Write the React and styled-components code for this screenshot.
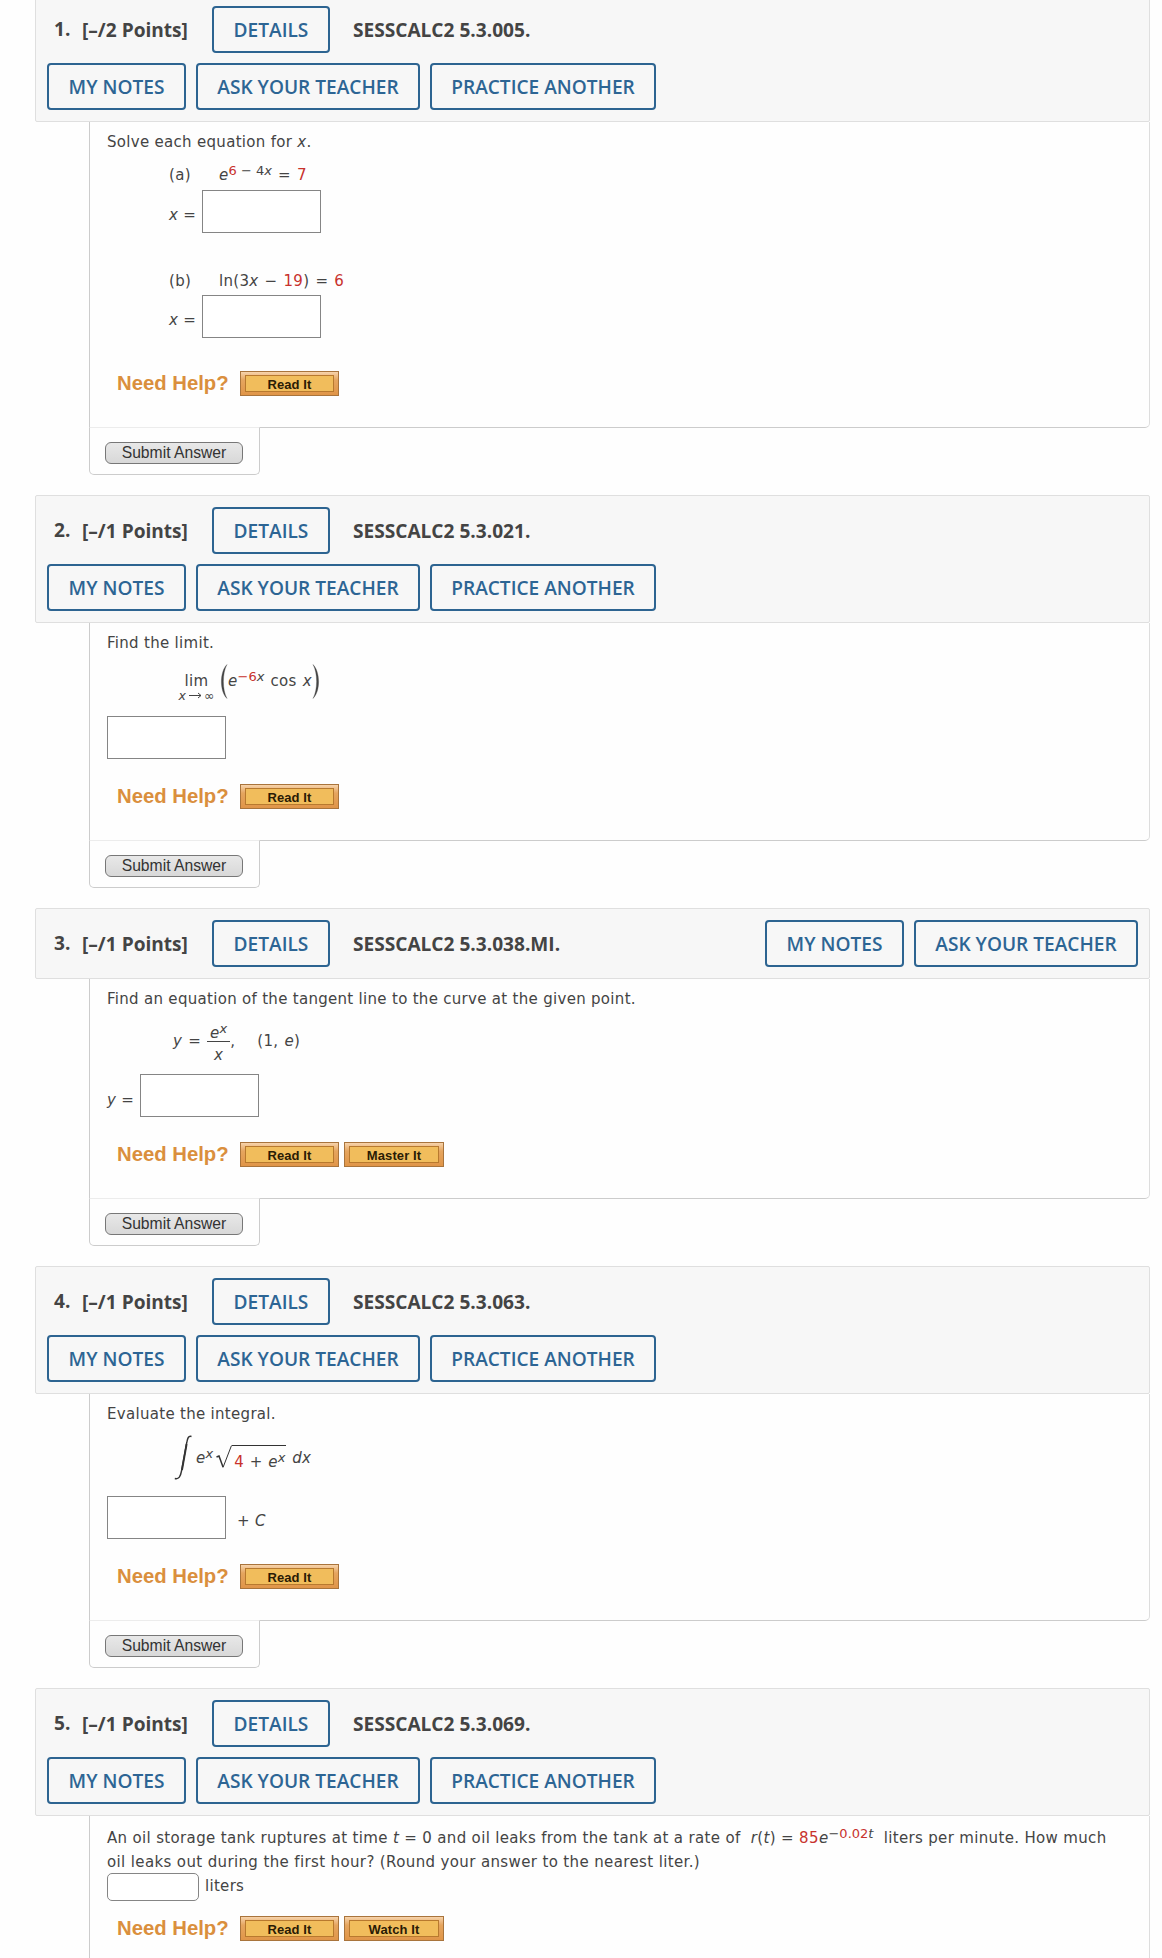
import React from "react";
import styled, { createGlobalStyle } from "styled-components";

const GlobalStyle = createGlobalStyle`
  * {
    box-sizing: border-box;
  }
  body {
    margin: 0;
    background: #fefefe;
    overflow: hidden;
  }
`;

const Page = styled.main`
  height: 1958px;
  overflow: hidden;
  padding: 0 12px 0 35px;
  color: #444;
`;

const Question = styled.section`
  margin-bottom: 20px;
  &:first-child {
    margin-top: -6px;
  }
`;

const Header = styled.header`
  display: flex;
  flex-wrap: wrap;
  justify-content: space-between;
  gap: 10px;
  padding: 11px;
  background: #f7f7f7;
  border: 1px solid #dfdfdf;
  border-radius: 2px;
  font-family: "Open Sans", sans-serif;
`;

const HeaderTitle = styled.div`
  display: flex;
  align-items: center;
  height: 47px;
  width: ${(props) => (props.$full ? "100%" : "auto")};
  padding-left: 7px;
  font-size: 19.1px;
  font-weight: 700;
  white-space: pre;
`;

const Number = styled.span`
  width: 28px;
  padding-bottom: 2px;
`;

const Points = styled.span`
  width: 130px;
`;

const Reference = styled.span`
  margin-left: 23px;
`;

const HeaderActions = styled.div`
  display: flex;
  gap: 10px;
`;

const HeaderButton = styled.button`
  width: ${(props) => props.$width}px;
  height: 47px;
  padding: 1px 0 0;
  color: #2d6594;
  background: transparent;
  border: 2px solid #2d6491;
  border-radius: 4px;
  font-family: "Open Sans", sans-serif;
  font-size: 19.1px;
  font-weight: 600;
  line-height: 41px;
  white-space: nowrap;
`;

const Body = styled.div`
  display: flex;
  flex-direction: column;
  height: ${(props) => props.$height}px;
  margin-left: 54px;
  padding: 7px 0 0 17px;
  border: 1px solid #ccc;
  border-top: 0;
  border-right-color: #ddd;
  border-radius: 0 0 5px 0;
  font-family: "DejaVu Sans", sans-serif;
  font-size: 15px;
  letter-spacing: 0.3px;
`;

const Line = styled.div`
  height: 24px;
  line-height: 24px;
  margin-top: ${(props) => props.$top || 0}px;
  white-space: pre;
`;

const Prompt = styled(Line)`
  padding-top: 1px;
  letter-spacing: ${(props) => props.$spacing || 0.3}px;
`;

const PartLine = styled(Line)`
  margin-left: 62px;
  word-spacing: 1px;
`;

const AnswerRow = styled.div`
  display: flex;
  align-items: center;
  margin-top: ${(props) => props.$top || 0}px;
  margin-left: ${(props) => props.$left || 0}px;
`;

const AnswerLabel = styled.span`
  width: ${(props) => props.$width}px;
  padding-top: ${(props) => props.$drop || 0}px;
  line-height: 20px;
`;

const AnswerInput = styled.input`
  width: ${(props) => (props.$small ? 92 : 119)}px;
  height: ${(props) => (props.$small ? 28 : 43)}px;
  padding: 0 6px;
  background: #fff;
  border: 1px solid #858585;
  border-radius: ${(props) => (props.$small ? 5 : 0)}px;
`;

const Unit = styled.span`
  margin-left: ${(props) => props.$left}px;
  padding-top: ${(props) => props.$drop || 0}px;
  padding-bottom: ${(props) => props.$lift || 0}px;
  line-height: 20px;
`;

const Part = styled.span`
  display: inline-block;
  width: 50px;
`;

const Sup = styled.sup`
  font-size: 13px;
  line-height: 0;
  letter-spacing: 0;
  word-spacing: 0;
  vertical-align: 5.5px;
`;

const Red = styled.span`
  color: #c8322d;
`;

const Gap = styled.span`
  display: inline-block;
  width: ${(props) => props.$width}px;
`;

const MathRow = styled.div`
  display: flex;
  align-items: center;
  height: ${(props) => props.$height}px;
  margin-top: ${(props) => props.$top}px;
  margin-left: ${(props) => props.$left}px;
  white-space: pre;
  line-height: 20px;
  word-spacing: 1px;
`;

const Limit = styled.span`
  display: flex;
  flex-direction: column;
  align-items: center;
  width: 41px;
  padding-top: 11px;
  line-height: 17px;
  small {
    display: flex;
    align-items: center;
    gap: 2px;
    font-size: 12.5px;
    line-height: 11px;
    letter-spacing: 0;
  }
`;

const Fraction = styled.span`
  display: flex;
  flex-direction: column;
  align-items: center;
  width: 23px;
  padding-top: 2px;
  span:first-child {
    width: 100%;
    height: 21px;
    padding-top: 2px;
    border-bottom: 1px solid #444;
    text-align: center;
  }
  span:last-child {
    height: 21px;
    line-height: 26px;
  }
`;

const Radicand = styled.span`
  height: 25px;
  width: 54px;
  padding: 6px 0 0 2px;
  border-top: 1px solid #333;
  letter-spacing: 0.1px;
`;

const Help = styled.div`
  display: flex;
  align-items: flex-start;
  gap: 5px;
  margin-top: ${(props) => (props.$top ? `${props.$top}px` : "auto")};
  margin-left: 10px;
  margin-bottom: 31px;
  letter-spacing: 0;
`;

const HelpTitle = styled.span`
  width: 118px;
  color: #da8f3d;
  font-family: "Liberation Sans", Arial, sans-serif;
  font-size: 20.3px;
  font-weight: 700;
  line-height: 24px;
  white-space: nowrap;
`;

const HelpButton = styled.button`
  width: 99px;
  height: 25px;
  padding: 3px 4px;
  background: linear-gradient(#f7d3ab, #e5a55f 35%, #e09548);
  border: 1px solid #a9743c;
  & + & {
    width: 100px;
  }
  span {
    display: block;
    height: 17px;
    background: #f1bd5c;
    border: 1px solid #b8792e;
    color: #2a1b05;
    font-family: "Liberation Sans", Arial, sans-serif;
    font-size: 13px;
    font-weight: 700;
    line-height: 17px;
    letter-spacing: 0.1px;
  }
`;

const Footer = styled.div`
  width: 171px;
  height: 48px;
  margin: -1px 0 0 54px;
  padding: 14px 15px;
  background: #fefefe;
  border: 1px solid #ccc;
  border-top-color: #ececec;
  border-radius: 0 0 5px 5px;
`;

const SubmitButton = styled.button`
  display: block;
  width: 138px;
  height: 22px;
  padding: 0;
  color: #333;
  background: linear-gradient(#e8e8e8, #d8d8d8);
  border: 1px solid #777;
  border-radius: 6px;
  font-family: "Liberation Sans", Arial, sans-serif;
  font-size: 15.7px;
  line-height: 20px;
`;

const Paren = ({ right }) => (
  <svg width="8" height="35" viewBox="0 0 8 35">
    <path
      d={
        right
          ? "M1 .5C8 7 9 27 1 34.5C5.800 26 5.800 9 1 .5Z"
          : "M7 .5C0 7-1 27 7 34.500C2.200 26 2.200 9 7 .5Z"
      }
      fill="#444"
      stroke="#444"
      strokeWidth=".3"
    />
  </svg>
);

const Arrow = () => (
  <svg width="14" height="7" viewBox="0 0 14 7">
    <path d="M1 3.500H13M10 1L13 3.500L10 6" fill="none" stroke="#444" />
  </svg>
);

const Integral = () => (
  <svg width="18" height="45" viewBox="0 0 18 45">
    <path
      d="M17.500 1.500C14.500 .5 13.500 3 12.700 8L7.500 36C6.500 41.500 5 44.500.8 43.500"
      fill="none"
      stroke="#333"
      strokeWidth="1.400"
    />
    <path d="M12.600 9L8 35" stroke="#333" strokeWidth="1.900" />
  </svg>
);

const Radical = () => (
  <svg width="16" height="25" viewBox="0 0 16 25">
    <path d="M.5 12L3 11L7 22" fill="none" stroke="#333" strokeWidth="1.500" />
    <path d="M7 22.500L15.500 .5" fill="none" stroke="#333" />
  </svg>
);

const NeedHelp = ({ items, top }) => (
  <Help $top={top}>
    <HelpTitle>Need Help?</HelpTitle>
    {items.map((item) => (
      <HelpButton key={item}>
        <span>{item}</span>
      </HelpButton>
    ))}
  </Help>
);

const Exercise = ({ number, points, reference, height, inline, open, children }) => (
  <Question>
    <Header>
      <HeaderTitle $full={!inline}>
        <Number>{number}.</Number>
        <Points>[–/{points} Points]</Points>
        <HeaderButton $width={118}>DETAILS</HeaderButton>
        <Reference>{reference}</Reference>
      </HeaderTitle>
      <HeaderActions>
        <HeaderButton $width={139}>MY NOTES</HeaderButton>
        <HeaderButton $width={224}>ASK YOUR TEACHER</HeaderButton>
        {!inline && <HeaderButton $width={226}>PRACTICE ANOTHER</HeaderButton>}
      </HeaderActions>
    </Header>
    <Body $height={height}>{children}</Body>
    {!open && (
      <Footer>
        <SubmitButton>Submit Answer</SubmitButton>
      </Footer>
    )}
  </Question>
);

const App = () => {
  return (
    <>
      <GlobalStyle />
      <Page>
        <Exercise number={1} points={2} reference="SESSCALC2 5.3.005." height={306}>
          <Prompt>
            Solve each equation for <i>x</i>.
          </Prompt>
          <PartLine $top={10}>
            <Part>(a)</Part>
            <i>e</i>
            <Sup>
              <Red>6</Red> − 4<i>x</i>
            </Sup>
            {" = "}
            <Red>7</Red>
          </PartLine>
          <AnswerRow $top={3} $left={62}>
            <AnswerLabel $width={33} $drop={6}>
              <i>x</i> =
            </AnswerLabel>
            <AnswerInput />
          </AnswerRow>
          <PartLine $top={36}>
            <Part>(b)</Part>
            ln(3<i>x</i> − <Red>19</Red>) = <Red>6</Red>
          </PartLine>
          <AnswerRow $top={2} $left={62}>
            <AnswerLabel $width={33} $drop={6}>
              <i>x</i> =
            </AnswerLabel>
            <AnswerInput />
          </AnswerRow>
          <NeedHelp items={["Read It"]} />
        </Exercise>

        <Exercise number={2} points={1} reference="SESSCALC2 5.3.021." height={218}>
          <Prompt>Find the limit.</Prompt>
          <MathRow $height={36} $top={9} $left={69}>
            <Limit>
              <span>lim</span>
              <small>
                <i>x</i>
                <Arrow />
                <span>∞</span>
              </small>
            </Limit>
            <Gap $width={3} />
            <Paren />
            <span>
              <i>e</i>
              <Sup>
                <Red>−6</Red>
                <i>x</i>
              </Sup>
              {" cos "}
              <i>x</i>
            </span>
            <Paren right />
          </MathRow>
          <AnswerRow $top={17}>
            <AnswerInput />
          </AnswerRow>
          <NeedHelp items={["Read It"]} />
        </Exercise>

        <Exercise number={3} points={1} reference="SESSCALC2 5.3.038.MI." height={220} inline>
          <Prompt>Find an equation of the tangent line to the curve at the given point.</Prompt>
          <MathRow $height={42} $top={10} $left={66}>
            <span>
              <i>y</i> ={" "}
            </span>
            <Fraction>
              <span>
                <i>e</i>
                <Sup>
                  <i>x</i>
                </Sup>
              </span>
              <span>
                <i>x</i>
              </span>
            </Fraction>
            <span>,</span>
            <Gap $width={22} />
            <span>
              (1, <i>e</i>)
            </span>
          </MathRow>
          <AnswerRow $top={12}>
            <AnswerLabel $width={33} $drop={8}>
              <i>y</i> =
            </AnswerLabel>
            <AnswerInput />
          </AnswerRow>
          <NeedHelp items={["Read It", "Master It"]} />
        </Exercise>

        <Exercise number={4} points={1} reference="SESSCALC2 5.3.063." height={227}>
          <Prompt>Evaluate the integral.</Prompt>
          <MathRow $height={45} $top={10} $left={67}>
            <Integral />
            <Gap $width={4} />
            <span>
              <i>e</i>
              <Sup>
                <i>x</i>
              </Sup>
            </span>
            <Gap $width={3} />
            <Radical />
            <Radicand>
              <Red>4</Red> + <i>e</i>
              <Sup>
                <i>x</i>
              </Sup>
            </Radicand>
            <Gap $width={6} />
            <i>dx</i>
          </MathRow>
          <AnswerRow $top={16}>
            <AnswerInput />
            <Unit $left={11} $drop={7}>
              + <i>C</i>
            </Unit>
          </AnswerRow>
          <NeedHelp items={["Read It"]} />
        </Exercise>

        <Exercise number={5} points={1} reference="SESSCALC2 5.3.069." height={170} open>
          <Prompt $top={2} $spacing={0.34}>
            An oil storage tank ruptures at time <i>t</i> = 0 and oil leaks from the tank at a rate of
            {"  "}
            <i>r</i>(<i>t</i>) = <Red>85</Red>
            <i>e</i>
            <Sup>
              −<Red>0.02</Red>
              <i>t</i>
            </Sup>
            {"  "}liters per minute. How much
          </Prompt>
          <Prompt $spacing={0.37}>
            oil leaks out during the first hour? (Round your answer to the nearest liter.)
          </Prompt>
          <AnswerRow>
            <AnswerInput $small />
            <Unit $left={6} $lift={2}>
              liters
            </Unit>
          </AnswerRow>
          <NeedHelp items={["Read It", "Watch It"]} top={15} />
        </Exercise>
      </Page>
    </>
  );
};

export default App;
